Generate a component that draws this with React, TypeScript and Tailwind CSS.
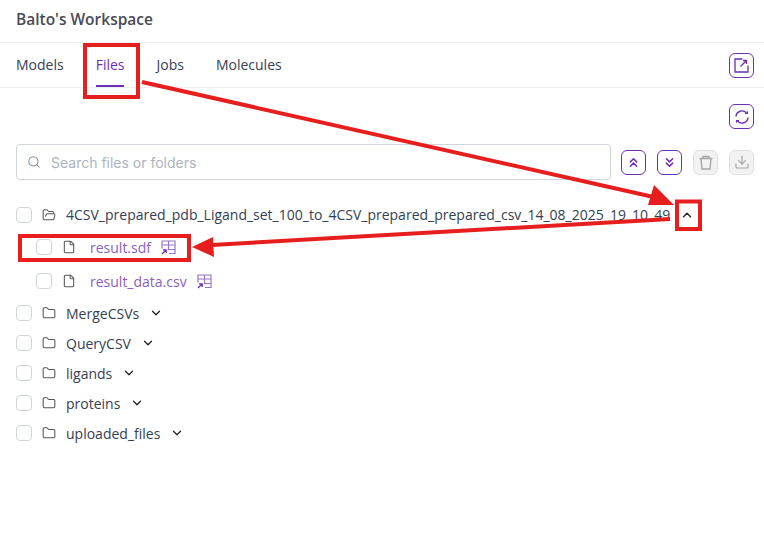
import { ChevronDown, ChevronUp, ChevronsDown, ChevronsUp, Download, File, Folder, FolderOpen, Search } from "lucide-react";

const folders = ["MergeCSVs", "QueryCSV", "ligands", "proteins", "uploaded_files"];

const Checkbox = () => (
  <div className="w-4 h-4 rounded-[4px] border border-[#d0d5dd] bg-white shrink-0" />
);

const TableIcon = () => (
  <svg width="15" height="15" viewBox="0 0 15 15" fill="none" stroke="#9a74c8" strokeWidth="1.2" className="ml-[10px] shrink-0">
    <path d="M1 8.5V1H14V13.5H8" />
    <path d="M1 5H14M7.5 1V10M7.5 9.5H14" />
    <path d="M1 14L5 10M2 9.8H5.2V13" stroke="#6b2fb3" />
  </svg>
);

const OpenIcon = () => (
  <svg width="15" height="15" viewBox="0 0 15 15" fill="none" stroke="currentColor" strokeWidth="1.3">
    <path d="M14 7.5V14H1V1H8.5" />
    <path d="M6.5 8.5L12 3M9 2.5H12.5V6" />
  </svg>
);

const SyncIcon = () => (
  <svg width="16" height="16" viewBox="0 0 16 16" fill="none" stroke="currentColor" strokeWidth="1.4">
    <path d="M2 7.5A6 6 0 0 1 12.5 4" />
    <path d="M14 8.5A6 6 0 0 1 3.5 12" />
    <path d="M11 4.5H13.4V2.2" strokeWidth="1.1" />
    <path d="M5 11.5H2.6V13.8" strokeWidth="1.1" />
  </svg>
);

const TrashIcon = () => (
  <svg width="14" height="15" viewBox="0 0 14 15" fill="none" stroke="currentColor" strokeWidth="1.4">
    <path d="M0.5 3.5H13.5M4 3.5V1.5H10V3.5M2 3.5L3 14H11L12 3.5" />
  </svg>
);

const PurpleButton = ({ children }: { children: React.ReactNode }) => (
  <button className="w-[25px] h-[25px] rounded-[6px] border border-[#6b2fb3] bg-white flex items-center justify-center text-[#6b2fb3]">
    {children}
  </button>
);

const GrayButton = ({ children }: { children: React.ReactNode }) => (
  <button className="w-[25px] h-[25px] rounded-[6px] border border-[#e0e0e0] bg-[#f2f2f2] flex items-center justify-center text-[#a6a6a6]">
    {children}
  </button>
);

const FileRow = ({ name }: { name: string }) => (
  <div className="h-[34px] flex items-center pl-[36px]">
    <Checkbox />
    <File size={14} strokeWidth={1.8} className="ml-[10px] text-[#555]" />
    <span className="ml-[14px] text-[14px] text-[#8a5fbf]">{name}</span>
    <TableIcon />
  </div>
);

const App = () => {
  return (
    <div className="relative w-[764px] h-[548px] overflow-hidden bg-white font-['Open_Sans',sans-serif] text-[#344054]">
      <div className="h-[43px] border-b border-[#f0f0f0] pl-4 flex items-center">
        <span className="text-[15.5px] font-semibold text-[#4a4a55] pb-[2px]">Balto's Workspace</span>
      </div>
      <div className="h-[45px] border-b border-[#eeeeee] pl-4 pr-[10px] flex items-center justify-between">
        <div className="flex gap-8 text-[14px] h-full">
          <span className="pt-[11px]">Models</span>
          <span className="pt-[11px] h-[44px] border-b-2 border-[#6b2fb3] text-[#6b2fb3]">Files</span>
          <span className="pt-[11px]">Jobs</span>
          <span className="pt-[11px]">Molecules</span>
        </div>
        <PurpleButton>
          <OpenIcon />
        </PurpleButton>
      </div>
      <div className="flex justify-end pr-[10px] pt-[16px]">
        <PurpleButton>
          <SyncIcon />
        </PurpleButton>
      </div>
      <div className="flex items-center pl-4 pr-[10px] mt-[15px]">
        <div className="w-[595px] h-[36px] border border-[#d0d5dd] rounded-[4px] flex items-center pl-[10px] font-['Inter',sans-serif]">
          <Search size={14} strokeWidth={1.8} className="text-[#8a8f98]" />
          <span className="ml-[10px] text-[14px] text-[#adb3bf]">Search files or folders</span>
        </div>
        <div className="flex gap-[11px] ml-[10px]">
          <PurpleButton><ChevronsUp size={15} strokeWidth={2.4} /></PurpleButton>
          <PurpleButton><ChevronsDown size={15} strokeWidth={2.4} /></PurpleButton>
          <GrayButton><TrashIcon /></GrayButton>
          <GrayButton><Download size={16} strokeWidth={1.8} /></GrayButton>
        </div>
      </div>
      <div className="mt-[19px]">
        <div className="h-[31px] flex items-center pl-[16px]">
          <Checkbox />
          <FolderOpen size={14} strokeWidth={1.8} className="ml-[10px] text-[#555]" />
          <span className="ml-[10px] text-[14px] whitespace-nowrap">4CSV_prepared_pdb_Ligand_set_100_to_4CSV_prepared_prepared_csv_14_08_2025_19_10_49</span>
          <ChevronUp size={14} strokeWidth={2.4} className="ml-[10px] text-[#222]" />
        </div>
        <FileRow name="result.sdf" />
        <FileRow name="result_data.csv" />
        <div>
          {folders.map((name) => (
            <div key={name} className="h-[30px] flex items-center pl-[16px]">
              <Checkbox />
              <Folder size={14} strokeWidth={1.8} className="ml-[10px] text-[#555]" />
              <span className="ml-[10px] text-[14px]">{name}</span>
              <ChevronDown size={14} strokeWidth={2.2} className="ml-[10px] text-[#222]" />
            </div>
          ))}
        </div>
      </div>
      {/* red annotations drawn on top of the screenshot */}
      <svg width="764" height="548" className="absolute left-0 top-0 pointer-events-none" fill="none" stroke="#e61e1e">
        <rect x="85" y="45" width="53" height="52" strokeWidth="4" />
        <rect x="677" y="201.5" width="23" height="27.5" strokeWidth="4" />
        <rect x="20" y="236" width="169" height="24" strokeWidth="4" />
        <path d="M142 82L658 198" strokeWidth="4" />
        <path d="M674 205L654 185L648 205Z" fill="#e61e1e" stroke="none" />
        <path d="M670 219L212 245" strokeWidth="4" />
        <path d="M192 247L213 237L214 257Z" fill="#e61e1e" stroke="none" />
      </svg>
    </div>
  );
};

export default App;
